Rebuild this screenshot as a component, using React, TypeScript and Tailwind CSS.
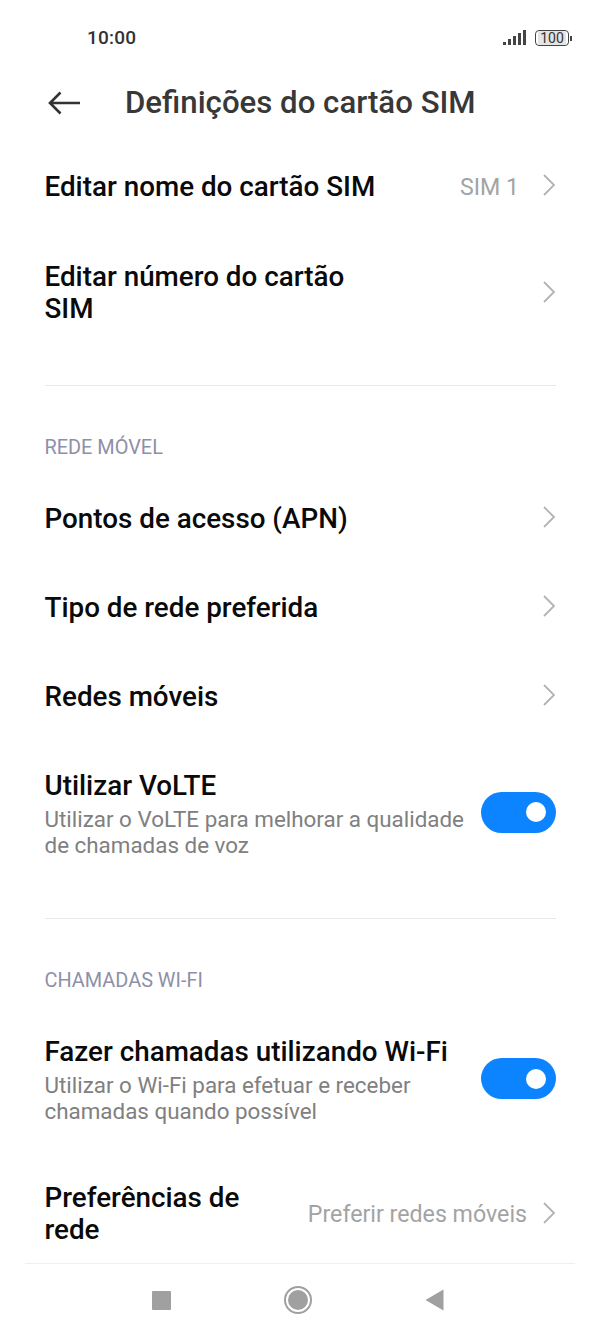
import React from "react"

const font = { fontFamily: "Roboto, sans-serif" }

function Chevron() {
  return (
    <svg width="14" height="24" viewBox="0 0 14 24" fill="none" className="shrink-0 mb-[3px]">
      <path d="M2 2l10 10L2 22" stroke="#b3b3b3" strokeWidth="1.8" />
    </svg>
  )
}

function Toggle() {
  return (
    <div className="w-[75px] h-[41px] rounded-full bg-[#0d84ff] flex items-center justify-end pr-[10.5px] shrink-0 mb-[4px]">
      <div className="w-5 h-5 rounded-full bg-white" />
    </div>
  )
}

function LinkRow({ title, value, valueClass }: { title: React.ReactNode; value?: string; valueClass?: string }) {
  return (
    <div className="flex items-center justify-between py-[28.5px]">
      <div className="text-[27.8px] leading-8 font-medium text-[#0a0a0a]">{title}</div>
      <div className="flex items-center">
        {value && <span className={`text-[23.2px] text-[#a3a3a3] ${valueClass}`}>{value}</span>}
        <Chevron />
      </div>
    </div>
  )
}

function ToggleRow({ title, desc }: { title: string; desc: React.ReactNode }) {
  return (
    <div className="flex items-center justify-between py-[28.5px]">
      <div>
        <div className="text-[27.8px] leading-8 font-medium text-[#0a0a0a]">{title}</div>
        <div className="mt-[4px] mb-[1px] text-[22.4px] leading-[26px] text-[#808080]">{desc}</div>
      </div>
      <Toggle />
    </div>
  )
}

function SectionLabel({ children }: { children: string }) {
  return <div className="pt-[49px] pb-[13.5px] text-[19.9px] leading-[26px] text-[#8e90a8]">{children}</div>
}

export default function App() {
  return (
    <div className="w-[601px] h-[1336px] bg-white flex flex-col overflow-hidden" style={font}>
      <div className="flex items-center justify-between h-[38px] mt-[19px] pl-[87px] pr-[29px]">
        <span className="text-[19px] font-medium text-[#333333] tracking-[0.2px]">10:00</span>
        <div className="flex items-center gap-[8px]">
          <svg width="24" height="16" viewBox="0 0 24 16" fill="#444444">
            <rect x="0" y="12" width="3" height="3" />
            <rect x="5" y="9" width="3" height="6" />
            <rect x="10" y="6" width="3" height="9" />
            <rect x="15" y="3" width="3" height="12" />
            <rect x="20" y="0" width="3" height="15" />
          </svg>
          <div className="flex items-center">
            <div className="w-[34px] h-[16px] rounded-[4px] border-[1.5px] border-[#444444] flex items-center justify-center">
              <span className="text-[14px] leading-none text-[#333333] bg-[#e4e4e4] px-[2px] rounded-[2px]">100</span>
            </div>
            <div className="w-[2px] h-[5px] ml-[1px] bg-[#444444]" />
          </div>
        </div>
      </div>

      <div className="flex items-center h-[64px] mt-[14px] pl-[48px] mb-[6px]">
        <svg width="33" height="24" viewBox="0 0 33 24" fill="none" className="shrink-0">
          <path d="M32 12H2M12.5 1.5L2 12l10.5 10.5" stroke="#333333" strokeWidth="2.6" />
        </svg>
        <h1 className="ml-[44px] text-[31.2px] font-medium text-[#383838]">Definições do cartão SIM</h1>
      </div>

      <main className="flex-1 overflow-hidden pl-[44.5px] pr-[45px]">
        <LinkRow title="Editar nome do cartão SIM" value="SIM 1" valueClass="mr-[23px]" />
        <LinkRow title={<>Editar número do cartão<br />SIM</>} />
        <div className="mt-[31px] h-px bg-[#e8e8e8]" />

        <SectionLabel>REDE MÓVEL</SectionLabel>
        <LinkRow title="Pontos de acesso (APN)" />
        <LinkRow title="Tipo de rede preferida" />
        <LinkRow title="Redes móveis" />
        <ToggleRow title="Utilizar VoLTE" desc={<>Utilizar o VoLTE para melhorar a qualidade<br />de chamadas de voz</>} />
        <div className="mt-[31px] h-px bg-[#e8e8e8]" />

        <SectionLabel>CHAMADAS WI-FI</SectionLabel>
        <ToggleRow title="Fazer chamadas utilizando Wi-Fi" desc={<>Utilizar o Wi-Fi para efetuar e receber<br />chamadas quando possível</>} />
        <LinkRow title={<>Preferências de<br />rede</>} value="Preferir redes móveis" valueClass="mr-[15px]" />
      </main>

      <div className="h-[73px] ml-[25px] mr-[26px] border-t border-[#f0f0f0] flex items-center justify-between pl-[127px] pr-[131px]">
        <div className="w-[19px] h-[19px] bg-[#a0a0a0] rounded-[1px]" />
        <div className="w-[28px] h-[28px] rounded-full border-2 border-[#a0a0a0] flex items-center justify-center">
          <div className="w-[20px] h-[20px] rounded-full bg-[#a0a0a0]" />
        </div>
        <svg width="19" height="22" viewBox="0 0 19 22" fill="#a0a0a0">
          <path d="M18.5 0.5v21L0.5 11z" />
        </svg>
      </div>
    </div>
  )
}
